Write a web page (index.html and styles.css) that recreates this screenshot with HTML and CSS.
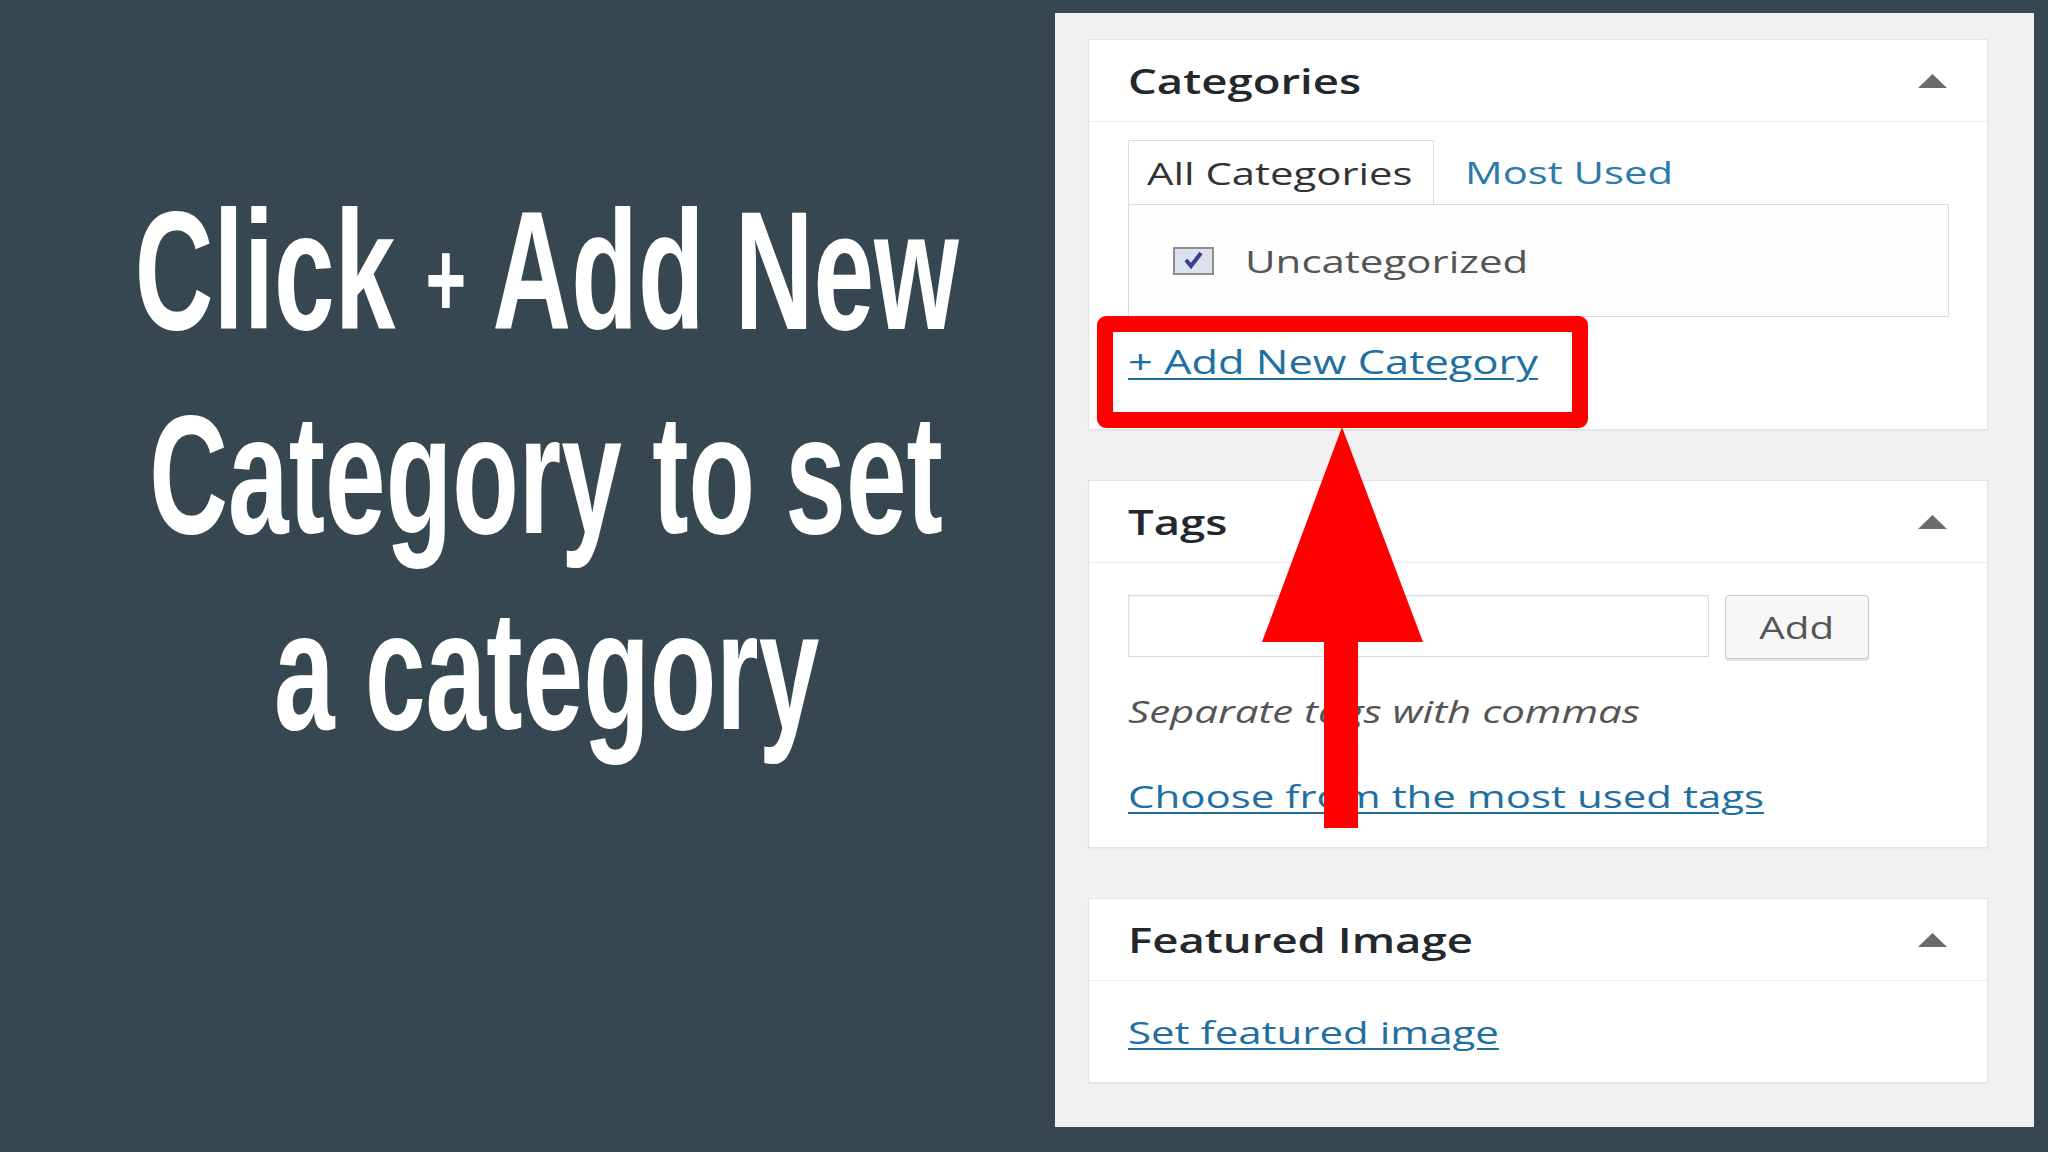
FILE: index.html
```html
<!DOCTYPE html>
<html lang="en">
<head>
<meta charset="utf-8">
<title>Click + Add New Category</title>
<link rel="stylesheet" href="styles.css">
</head>
<body>
<div class="slide">
  <div class="left">
    <div class="headline">
      <div class="hl-line">Click <span class="plus">+</span> Add New</div>
      <div class="hl-line">Category to set</div>
      <div class="hl-line">a category</div>
    </div>
  </div>

  <div class="panel">
    <section class="box box-cat">
      <div class="box-head">
        <span class="title">Categories</span>
        <svg class="toggle" viewBox="0 0 29 14"><polygon points="14.5,0 29,14 0,14"/></svg>
      </div>
      <div class="box-body cat-body">
        <div class="tabs">
          <div class="tab tab-active"><span class="sx tab-text">All Categories</span></div>
          <div class="tab tab-link"><span class="sx tab-text link-color">Most Used</span></div>
        </div>
        <div class="tab-panel">
          <svg class="checkbox" viewBox="0 0 41 28">
            <rect x="1" y="1" width="39" height="26" fill="#dde0ee" stroke="#8d8d8d" stroke-width="2"/>
            <path d="M13 13 L18 19 L28 6" fill="none" stroke="#3a3f8c" stroke-width="4"/>
          </svg>
          <span class="sx item-text">Uncategorized</span>
        </div>
        <div class="link-line add-line"><a class="sx link add-link" href="#">+ Add New Category</a></div>
      </div>
    </section>

    <section class="box box-tags">
      <div class="box-head">
        <span class="title">Tags</span>
        <svg class="toggle" viewBox="0 0 29 14"><polygon points="14.5,0 29,14 0,14"/></svg>
      </div>
      <div class="box-body tags-body">
        <div class="tag-row">
          <input class="tag-input" type="text" aria-label="Tags">
          <button class="tag-btn" type="button"><span class="sx btn-text">Add</span></button>
        </div>
        <div class="hint"><span class="sx hint-text">Separate tags with commas</span></div>
        <div class="link-line most-line"><a class="sx link" href="#">Choose from the most used tags</a></div>
      </div>
    </section>

    <section class="box box-feat">
      <div class="box-head">
        <span class="title">Featured Image</span>
        <svg class="toggle" viewBox="0 0 29 14"><polygon points="14.5,0 29,14 0,14"/></svg>
      </div>
      <div class="box-body feat-body">
        <div class="link-line"><a class="sx link" href="#">Set featured image</a></div>
      </div>
    </section>

    <div class="highlight"></div>
    <svg class="arrow" viewBox="0 0 162 402">
      <polygon points="80,0 161,215 96,215 96,401 62,401 62,215 0,215" fill="#ff0000"/>
    </svg>
  </div>
</div>
</body>
</html>
```

FILE: styles.css
```css
html, body {
  margin: 0;
  padding: 0;
}

body {
  width: 2048px;
  height: 1152px;
  overflow: hidden;
  background: #374751;
}

.slide {
  display: flex;
  height: 1152px;
  padding-top: 13px;
  box-sizing: border-box;
}

/* ---------- left headline ---------- */
.left {
  width: 1055px;
  flex: none;
  padding-left: 38px;
  padding-top: 160px;
  box-sizing: border-box;
}

.headline {
  display: flex;
  flex-direction: column;
  align-items: center;
}

.hl-line {
  font-family: "Liberation Sans", Arial, sans-serif;
  font-weight: 700;
  font-size: 169px;
  line-height: 196px;
  color: #ffffff;
  white-space: nowrap;
  transform: scaleX(0.645);
  transform-origin: center center;
}

.plus {
  font-size: 0.64em;
  vertical-align: 0.12em;
}

/* ---------- right panel ---------- */
.panel {
  position: relative;
  width: 979px;
  height: 1114px;
  flex: none;
  background: #f1f1f1;
  padding-top: 26px;
  padding-left: 33px;
  box-sizing: border-box;
}

.box {
  width: 900px;
  background: #ffffff;
  border: 1px solid #e3e3e3;
  box-sizing: border-box;
  box-shadow: 0 1px 2px rgba(0, 0, 0, 0.05);
}

.box + .box {
  margin-top: 50px;
}

.box-head {
  height: 81px;
  border-bottom: 1px solid #ececec;
  display: flex;
  align-items: center;
  justify-content: space-between;
  padding: 0 40px 0 39px;
}

.title {
  display: inline-block;
  font-family: "Open Sans", "Liberation Sans", sans-serif;
  font-weight: 600;
  font-size: 35px;
  line-height: 40px;
  color: #23282d;
  transform: scaleX(1.3);
  transform-origin: left center;
  white-space: nowrap;
}

.toggle {
  width: 29px;
  height: 14px;
  fill: #6b6b6b;
  flex: none;
}

.sx {
  display: inline-block;
  font-family: "Open Sans", "Liberation Sans", sans-serif;
  font-size: 31px;
  line-height: 40px;
  white-space: nowrap;
  transform: scaleX(1.355);
  transform-origin: left center;
}

.box-body {
  padding: 0 38px 0 39px;
}

/* categories */
.cat-body {
  padding-top: 18px;
  padding-bottom: 47px;
}

.tabs {
  display: flex;
  height: 64px;
}

.tab {
  height: 64px;
  box-sizing: border-box;
  display: flex;
  align-items: center;
}

.tab-active {
  width: 306px;
  border: 1px solid #dcdcdc;
  border-bottom: none;
  padding-left: 18px;
  background: #ffffff;
}

.tab-link {
  margin-left: 31px;
}

.tab-text {
  color: #333333;
  transform: scaleX(1.35);
}

.link-color {
  color: #2a7bab;
}

.tab-panel {
  height: 113px;
  box-sizing: border-box;
  border: 1px solid #dcdcdc;
  background: #fdfdfd;
  display: flex;
  align-items: center;
  padding-left: 44px;
  gap: 31px;
}

.checkbox {
  width: 41px;
  height: 28px;
  flex: none;
}

.item-text {
  color: #555555;
}

.link-line {
  height: 40px;
  line-height: 40px;
}

.add-line {
  margin-top: 25px;
}

.link {
  color: #1f70a0;
  text-decoration: underline;
  text-decoration-thickness: 2px;
  text-underline-offset: 4px;
}

.add-link {
  font-size: 32px;
}

/* tags */
.tags-body {
  padding-top: 32px;
  padding-bottom: 31px;
}

.tag-row {
  display: flex;
  align-items: flex-start;
  gap: 16px;
  height: 64px;
}

.tag-input {
  width: 581px;
  height: 62px;
  margin: 0;
  padding: 0;
  border: 1px solid #dadada;
  box-sizing: border-box;
  background: #ffffff;
  box-shadow: inset 0 1px 2px rgba(0, 0, 0, 0.07);
  outline: none;
}

.tag-btn {
  width: 144px;
  height: 64px;
  margin: 0;
  padding: 0;
  border: 1px solid #cccccc;
  border-radius: 4px;
  background: #f7f7f7;
  box-shadow: 0 2px 1px rgba(0, 0, 0, 0.12);
  display: flex;
  align-items: center;
  justify-content: center;
  box-sizing: border-box;
}

.btn-text {
  color: #555555;
  transform: scaleX(1.3);
  transform-origin: center center;
}

.hint {
  margin-top: 32px;
  height: 40px;
}

.hint-text {
  font-style: italic;
  color: #555555;
}

.most-line {
  margin-top: 45px;
}

/* featured */
.feat-body {
  padding-top: 31px;
  padding-bottom: 30px;
}

/* ---------- annotations ---------- */
.highlight {
  position: absolute;
  left: 42px;
  top: 303px;
  width: 491px;
  height: 112px;
  box-sizing: border-box;
  border: 16px solid #ff0000;
  border-radius: 9px;
}

.arrow {
  position: absolute;
  left: 207px;
  top: 414px;
  width: 162px;
  height: 402px;
}
```
